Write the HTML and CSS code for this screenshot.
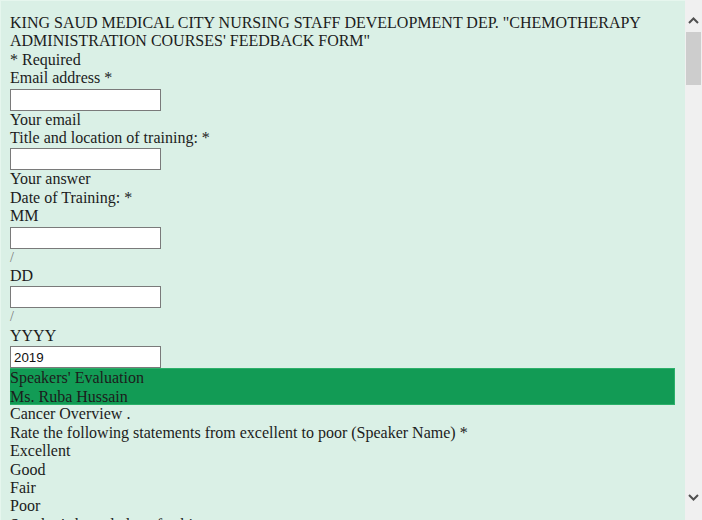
FILE: index.html
```html
<!DOCTYPE html>
<html>
<head>
<meta charset="utf-8">
<link rel="stylesheet" href="styles.css">
</head>
<body>
<div class="window">
  <div class="content">
    <div class="line">KING SAUD MEDICAL CITY NURSING STAFF DEVELOPMENT DEP. "CHEMOTHERAPY ADMINISTRATION COURSES' FEEDBACK FORM"</div>
    <div class="line">* Required</div>
    <div class="line">Email address *</div>
    <input class="field" type="text">
    <div class="line">Your email</div>
    <div class="line">Title and location of training: *</div>
    <input class="field" type="text">
    <div class="line">Your answer</div>
    <div class="line">Date of Training: *</div>
    <div class="line">MM</div>
    <input class="field" type="text">
    <div class="sep">/</div>
    <div class="line">DD</div>
    <input class="field" type="text">
    <div class="sep">/</div>
    <div class="line">YYYY</div>
    <input class="field" type="text" value="2019">
    <div class="band">
      <div class="line">Speakers' Evaluation</div>
      <div class="line">Ms. Ruba Hussain</div>
    </div>
    <div class="line">Cancer Overview .</div>
    <div class="line">Rate the following statements from excellent to poor (Speaker Name) *</div>
    <div class="line">Excellent</div>
    <div class="line">Good</div>
    <div class="line">Fair</div>
    <div class="line">Poor</div>
    <div class="line">Speaker's knowledge of subject</div>
  </div>
  <div class="scrollbar">
    <div class="arrow up">
      <svg width="11" height="7" viewBox="0 0 11 7"><path d="M1 6 L5.5 1.5 L10 6" fill="none" stroke="#505050" stroke-width="2"/></svg>
    </div>
    <div class="thumb"></div>
    <div class="track"></div>
    <div class="arrow down">
      <svg width="11" height="7" viewBox="0 0 11 7"><path d="M1 1 L5.5 5.5 L10 1" fill="none" stroke="#505050" stroke-width="2"/></svg>
    </div>
  </div>
</div>
</body>
</html>
```

FILE: styles.css
```css
html, body {
  margin: 0;
  padding: 0;
  height: 520px;
  overflow: hidden;
}
body {
  background: #daf0e6;
  font-family: "Liberation Serif", "Times New Roman", serif;
  font-size: 16px;
  color: #1c1c1c;
}
.window {
  display: flex;
  height: 520px;
}
.content {
  flex: 1;
  min-width: 0;
  height: 520px;
  overflow: hidden;
  padding: 13px 10px 0 9px;
  border-top: 1px solid #e6f6ee;
  border-left: 1px solid #e6f6ee;
  box-sizing: border-box;
}
.line {
  line-height: 18.4px;
}
.field {
  display: block;
  width: 151px;
  height: 22px;
  box-sizing: border-box;
  margin: 1px 0 0 0;
  padding: 1px 3px;
  border: 1px solid #7a7a7a;
  background: #fff;
  font-family: Arial, "Liberation Sans", sans-serif;
  font-size: 13.33px;
  color: #111;
  outline: none;
}
.sep {
  font-size: 14px;
  line-height: 18.4px;
  color: #777;
}
.band {
  margin-top: 0;
  background: #129b55;
  border: 1px solid #2cb06a;
  border-left: none;
  height: 37px;
  box-sizing: border-box;
}
.scrollbar {
  width: 17px;
  flex: none;
  background: #f0f0f0;
  display: flex;
  flex-direction: column;
  align-items: center;
}
.arrow {
  height: 17px;
  width: 17px;
  display: flex;
  align-items: center;
  justify-content: center;
}
.arrow.up {
  margin-top: 12px;
}
.arrow.down {
  margin-bottom: 14px;
}
.thumb {
  width: 15px;
  height: 53px;
  margin-top: 3px;
  background: #cdcdcd;
}
.track {
  flex: 1;
}
```
